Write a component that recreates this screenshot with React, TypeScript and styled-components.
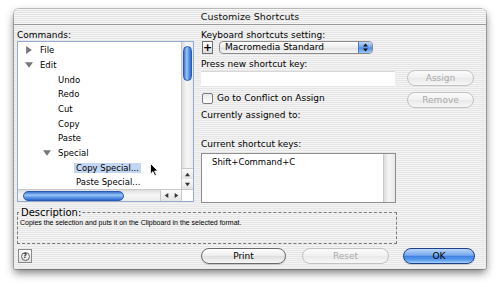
import React from 'react';
import styled, { createGlobalStyle } from 'styled-components';

const GlobalStyle = createGlobalStyle`
  html, body {
    margin: 0;
    padding: 0;
    background: #fff;
  }
  body {
    font-family: "DejaVu Sans", "Noto Sans", sans-serif;
    font-size: 9px;
    color: #000;
  }
`;

const Page = styled.div`
  position: relative;
  width: 500px;
  height: 287px;
  box-sizing: border-box;
  padding: 9px 0 0 14px;
  overflow: hidden;
`;

const Window = styled.div`
  width: 472px;
  height: 260px;
  display: flex;
  flex-direction: column;
  border-radius: 5px 5px 2px 2px;
  overflow: hidden;
  background: repeating-linear-gradient(to bottom, #f4f4f4 0 1px, #e6e6e6 1px 2px);
  box-shadow: 0 0 0 1px rgba(0, 0, 0, 0.22), 0 4px 8px rgba(0, 0, 0, 0.5);
`;

const TitleBar = styled.div`
  height: 15px;
  line-height: 15px;
  text-align: center;
  font-size: 9.5px;
  color: #111;
  border-bottom: 1px solid #9a9a9a;
  background: repeating-linear-gradient(to bottom, #f7f7f7 0 1px, #e3e3e3 1px 2px);
`;

const Body = styled.div`
  display: flex;
  flex-direction: column;
  padding: 4px 11px 0 3px;
`;

const TopSection = styled.div`
  display: flex;
`;

const LeftCol = styled.div`
  width: 177px;
  display: flex;
  flex-direction: column;
`;

const RightCol = styled.div`
  width: 195px;
  margin-left: 7px;
  display: flex;
  flex-direction: column;
`;

const ButtonCol = styled.div`
  width: 67px;
  margin-left: 11px;
  padding-top: 41px;
  display: flex;
  flex-direction: column;
  gap: 6px;
`;

const Label = styled.div<{ $top?: number }>`
  height: 12px;
  line-height: 12px;
  margin-top: ${({ $top }) => $top ?? 0}px;
  white-space: nowrap;
`;

/* ---------- command tree ---------- */

const ListFrame = styled.div`
  height: 161px;
  box-sizing: border-box;
  border: 1px solid #95acd0;
  background: #fff;
  display: grid;
  grid-template-columns: 1fr 12px;
  grid-template-rows: 1fr 12px;
`;

const TreeRows = styled.div`
  padding-top: 1px;
  overflow: hidden;
  font-size: 8.5px;
`;

const TreeRow = styled.div<{ $level: number }>`
  height: 14.67px;
  display: flex;
  align-items: center;
  padding-left: ${({ $level }) => $level * 18}px;
  white-space: nowrap;
`;

const Twisty = styled.span`
  width: 22px;
  flex: none;
  box-sizing: border-box;
  padding-left: 7px;
  display: flex;
  align-items: center;
`;

const ItemText = styled.span<{ $selected?: boolean }>`
  padding: 0 2px;
  margin-left: -2px;
  line-height: 10px;
  background: ${({ $selected }) => ($selected ? '#c3d6f2' : 'transparent')};
`;

const VScroll = styled.div`
  display: flex;
  flex-direction: column;
  border-left: 1px solid #c9c9c9;
  background: linear-gradient(to right, #dedede, #f6f6f6 45%, #ebebeb);
`;

const VThumb = styled.div`
  margin: 4px 1px 0 1px;
  height: 33px;
  border-radius: 5px;
  border: 1px solid #2b5bb0;
  background: linear-gradient(to right, #3d74cf, #9cc7f8 40%, #6aa3ee 60%, #2f68cc);
`;

const ScrollArrow = styled.div<{ $dir: 'up' | 'down' | 'left' | 'right' }>`
  width: ${({ $dir }) => ($dir === 'left' || $dir === 'right' ? '10px' : '11px')};
  height: ${({ $dir }) => ($dir === 'left' || $dir === 'right' ? '11px' : '10px')};
  display: flex;
  align-items: center;
  justify-content: center;
  background: linear-gradient(#fafafa, #e4e4e4);
  border-top: ${({ $dir }) => ($dir === 'up' ? '1px solid #c8c8c8' : 'none')};
  border-left: ${({ $dir }) => ($dir === 'left' ? '1px solid #c8c8c8' : 'none')};
`;

const HScroll = styled.div`
  display: flex;
  align-items: stretch;
  border-top: 1px solid #c9c9c9;
  background: linear-gradient(#dedede, #f6f6f6 45%, #ebebeb);
`;

const HTrack = styled.div`
  flex: 1;
  display: flex;
  align-items: center;
`;

const HThumb = styled.div`
  margin-left: 5px;
  width: 99px;
  height: 8px;
  border-radius: 5px;
  border: 1px solid #2b5bb0;
  background: linear-gradient(#3d74cf, #9cc7f8 40%, #6aa3ee 60%, #2f68cc);
`;

const Corner = styled.div`
  background: #fff;
  border-left: 1px solid #c9c9c9;
  border-top: 1px solid #c9c9c9;
`;

/* ---------- right side controls ---------- */

const PopupRow = styled.div`
  height: 13px;
  display: flex;
  gap: 6px;
  margin-left: 1px;
`;

const PlusBox = styled.div`
  width: 11px;
  box-sizing: border-box;
  border: 1px solid #6f6f6f;
  background: linear-gradient(#ffffff, #dcdcdc);
  display: flex;
  align-items: center;
  justify-content: center;
  font-weight: bold;
  font-size: 11px;
  line-height: 1;
`;

const Popup = styled.div`
  width: 154px;
  box-sizing: border-box;
  display: flex;
  border: 1px solid #8a8a8a;
  border-radius: 4px;
  overflow: hidden;
  background: linear-gradient(#ffffff, #ececec 50%, #e0e0e0 51%, #f6f6f6);
`;

const PopupText = styled.div`
  flex: 1;
  padding-left: 5px;
  line-height: 11px;
`;

const PopupArrows = styled.div`
  width: 13px;
  display: flex;
  align-items: center;
  justify-content: center;
  border-left: 1px solid #4774bf;
  background: linear-gradient(to bottom, #bcd7f8, #6fa5ed 48%, #4b8ae6 52%, #9cc9fa);
`;

const TextField = styled.div`
  margin-top: 1px;
  height: 15px;
  width: 194px;
  box-sizing: border-box;
  background: #fff;
  border-top: 1px solid #d8d8d8;
`;

const CheckRow = styled.div`
  margin-top: 6px;
  height: 12px;
  display: flex;
  align-items: center;
  gap: 4px;
  margin-left: 1px;
`;

const CheckBox = styled.span`
  width: 11px;
  height: 11px;
  box-sizing: border-box;
  border: 1px solid #7d7d7d;
  border-radius: 2px;
  background: linear-gradient(#e8e8e8, #ffffff);
`;

const KeysList = styled.div`
  margin-top: 3px;
  height: 50px;
  box-sizing: border-box;
  border: 1px solid #8e8e8e;
  background: #fff;
  display: grid;
  grid-template-columns: 1fr 12px;
`;

const KeysText = styled.div`
  padding: 3px 0 0 10px;
  font-size: 8.5px;
`;

const KeysTrack = styled.div`
  border-left: 1px solid #c9c9c9;
  background: linear-gradient(to right, #dcdcdc, #f6f6f6 45%, #e8e8e8);
`;

/* ---------- buttons ---------- */

type ButtonKind = 'normal' | 'disabled' | 'default';

const AquaButton = styled.div<{ $kind: ButtonKind; $width: number }>`
  width: ${({ $width }) => $width}px;
  height: 16px;
  box-sizing: border-box;
  border-radius: 8px;
  display: flex;
  align-items: center;
  justify-content: center;
  font-size: 9px;
  border: 1px solid
    ${({ $kind }) => ($kind === 'default' ? '#1f3f88' : $kind === 'disabled' ? '#c2c2c2' : '#6b6b6b')};
  color: ${({ $kind }) => ($kind === 'disabled' ? '#a9a9a9' : '#000')};
  background: ${({ $kind }) =>
    $kind === 'default'
      ? 'linear-gradient(#bad5f8, #76a9ee 45%, #3f80e2 52%, #5d9ff0 80%, #a9d4fb)'
      : $kind === 'disabled'
      ? 'linear-gradient(#fbfbfb, #f0f0f0 50%, #e9e9e9 51%, #f7f7f7)'
      : 'linear-gradient(#ffffff, #ececec 50%, #dedede 51%, #f7f7f7)'};
  box-shadow: ${({ $kind }) => ($kind === 'disabled' ? 'none' : '0 1px 1px rgba(0,0,0,0.15)')};
`;

/* ---------- description + bottom ---------- */

const DescGroup = styled.fieldset`
  margin: 4px 0 0 0;
  width: 380px;
  height: 37px;
  box-sizing: border-box;
  min-width: 0;
  padding: 0 2px;
  border: 1px dashed #7a7a7a;
`;

const DescLegend = styled.legend`
  font-size: 10px;
  line-height: 11px;
  padding: 0 1px 0 2px;
  margin-left: -1px;
`;

const DescText = styled.div`
  font-family: "Liberation Sans", Arial, sans-serif;
  font-size: 7px;
  line-height: 9px;
  white-space: nowrap;
`;

const BottomRow = styled.div`
  margin-top: 4px;
  height: 16px;
  display: flex;
  align-items: center;
`;

const HelpButton = styled.div`
  width: 14px;
  height: 14px;
  margin-left: 1px;
  box-sizing: border-box;
  border: 1px solid #8a8a8a;
  background: linear-gradient(#ffffff, #e2e2e2);
  display: flex;
  align-items: center;
  justify-content: center;
`;

const HelpGlyph = styled.span`
  width: 9px;
  height: 9px;
  box-sizing: border-box;
  border: 1px solid #666;
  border-radius: 50%;
  font-size: 7px;
  line-height: 7px;
  text-align: center;
  font-weight: bold;
  color: #333;
`;

const Pushes = styled.div`
  display: flex;
  margin-left: 169px;
  gap: 16px;
`;

const Cursor = styled.svg`
  position: absolute;
  left: 150px;
  top: 163px;
`;

const Tri = ({ dir, size = 6, color = '#6e6e6e' }: { dir: 'right' | 'down' | 'up' | 'left'; size?: number; color?: string }) => {
  const pts =
    dir === 'right'
      ? '1,0 6,3.5 1,7'
      : dir === 'left'
      ? '6,0 1,3.5 6,7'
      : dir === 'down'
      ? '0,1 7,1 3.5,6'
      : '0,6 7,6 3.5,1';
  return (
    <svg width={size} height={size} viewBox="0 0 7 7">
      <polygon points={pts} fill={color} />
    </svg>
  );
};

type Node = { label: string; level: number; twisty?: 'open' | 'closed'; selected?: boolean };

const tree: Node[] = [
  { label: 'File', level: 0, twisty: 'closed' },
  { label: 'Edit', level: 0, twisty: 'open' },
  { label: 'Undo', level: 1 },
  { label: 'Redo', level: 1 },
  { label: 'Cut', level: 1 },
  { label: 'Copy', level: 1 },
  { label: 'Paste', level: 1 },
  { label: 'Special', level: 1, twisty: 'open' },
  { label: 'Copy Special...', level: 2, selected: true },
  { label: 'Paste Special...', level: 2 },
];

export default function App() {
  return (
    <Page>
      <GlobalStyle />
      <Window>
        <TitleBar>Customize Shortcuts</TitleBar>
        <Body>
          <TopSection>
            <LeftCol>
              <Label>Commands:</Label>
              <ListFrame>
                <TreeRows>
                  {tree.map((n) => (
                    <TreeRow key={n.label} $level={n.level}>
                      <Twisty>{n.twisty && <Tri dir={n.twisty === 'open' ? 'down' : 'right'} size={8} color="#777" />}</Twisty>
                      <ItemText $selected={n.selected}>{n.label}</ItemText>
                    </TreeRow>
                  ))}
                </TreeRows>
                <VScroll>
                  <VThumb />
                  <div style={{ flex: 1 }} />
                  <ScrollArrow $dir="up">
                    <Tri dir="up" size={5} color="#333" />
                  </ScrollArrow>
                  <ScrollArrow $dir="down">
                    <Tri dir="down" size={5} color="#333" />
                  </ScrollArrow>
                </VScroll>
                <HScroll>
                  <HTrack>
                    <HThumb />
                  </HTrack>
                  <ScrollArrow $dir="left">
                    <Tri dir="left" size={5} color="#333" />
                  </ScrollArrow>
                  <ScrollArrow $dir="right">
                    <Tri dir="right" size={5} color="#333" />
                  </ScrollArrow>
                </HScroll>
                <Corner />
              </ListFrame>
            </LeftCol>

            <RightCol>
              <Label>Keyboard shortcuts setting:</Label>
              <PopupRow>
                <PlusBox>+</PlusBox>
                <Popup>
                  <PopupText>Macromedia Standard</PopupText>
                  <PopupArrows>
                    <svg width="5" height="9" viewBox="0 0 5 9">
                      <polygon points="0,3.5 5,3.5 2.5,0.5" fill="#111" />
                      <polygon points="0,5.5 5,5.5 2.5,8.5" fill="#111" />
                    </svg>
                  </PopupArrows>
                </Popup>
              </PopupRow>
              <Label $top={4}>Press new shortcut key:</Label>
              <TextField />
              <CheckRow>
                <CheckBox />
                <span>Go to Conflict on Assign</span>
              </CheckRow>
              <Label $top={5}>Currently assigned to:</Label>
              <Label $top={17}>Current shortcut keys:</Label>
              <KeysList>
                <KeysText>Shift+Command+C</KeysText>
                <KeysTrack />
              </KeysList>
            </RightCol>

            <ButtonCol>
              <AquaButton $kind="disabled" $width={67}>Assign</AquaButton>
              <AquaButton $kind="disabled" $width={67}>Remove</AquaButton>
            </ButtonCol>
          </TopSection>

          <DescGroup>
            <DescLegend>Description:</DescLegend>
            <DescText>Copies the selection and puts it on the Clipboard in the selected format.</DescText>
          </DescGroup>

          <BottomRow>
            <HelpButton>
              <HelpGlyph>?</HelpGlyph>
            </HelpButton>
            <Pushes>
              <AquaButton $kind="normal" $width={85}>Print</AquaButton>
              <AquaButton $kind="disabled" $width={87}>Reset</AquaButton>
              <AquaButton $kind="default" $width={72} style={{ marginLeft: -2 }}>OK</AquaButton>
            </Pushes>
          </BottomRow>
        </Body>
      </Window>
      <Cursor width="9" height="14" viewBox="0 0 9 14">
        <path d="M0.5 0.5 L0.5 11 L3 8.6 L4.8 12.8 L6.4 12.1 L4.6 8 L8 8 Z" fill="#000" stroke="#fff" strokeWidth="0.8" />
      </Cursor>
    </Page>
  );
}
